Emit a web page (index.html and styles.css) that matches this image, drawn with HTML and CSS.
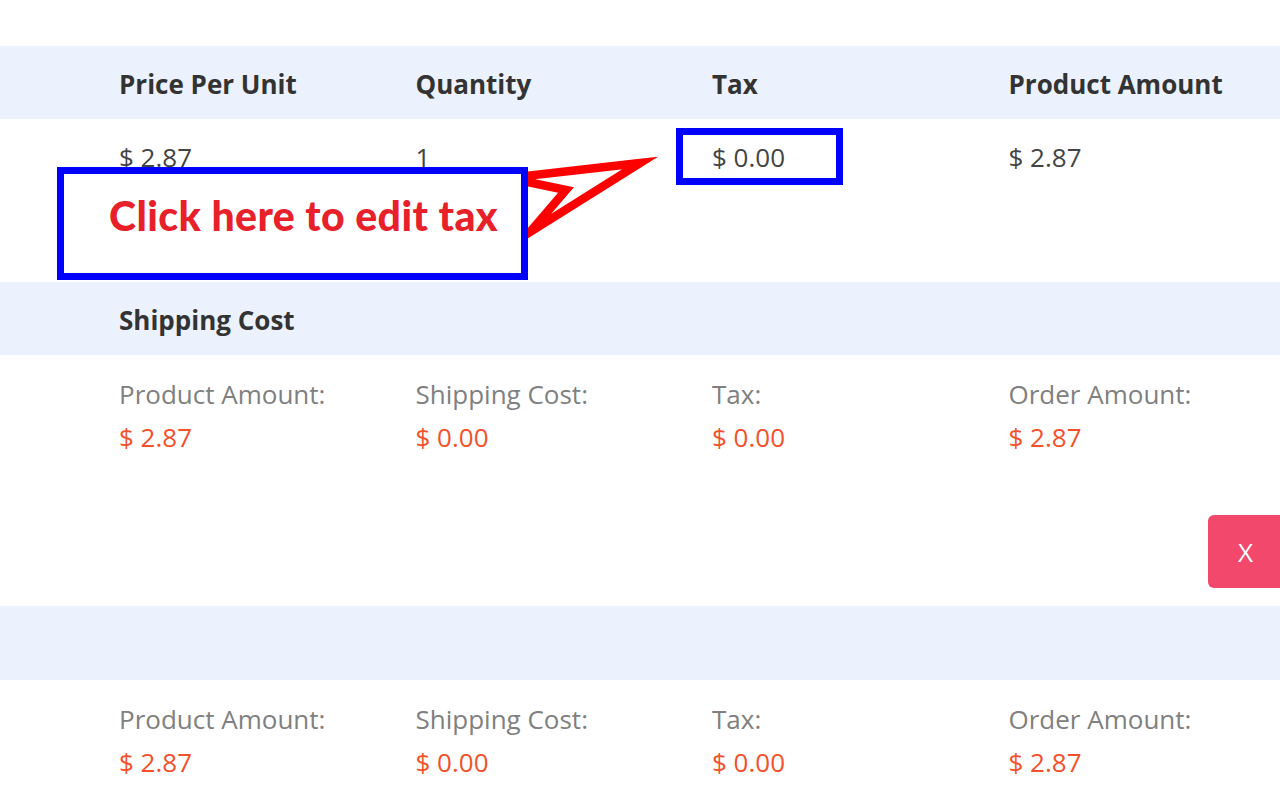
FILE: index.html
```html
<!DOCTYPE html>
<html>
<head>
<meta charset="utf-8">
<link rel="stylesheet" href="styles.css">
</head>
<body>
<div class="page">
  <div class="band cols">
    <div class="th">Price Per Unit</div>
    <div class="th">Quantity</div>
    <div class="th">Tax</div>
    <div class="th">Product Amount</div>
  </div>
  <div class="row cols">
    <div class="td">$ 2.87</div>
    <div class="td">1</div>
    <div class="td">$ 0.00</div>
    <div class="td">$ 2.87</div>
  </div>
  <div class="band cols">
    <div class="th">Shipping Cost</div>
  </div>
  <div class="summary cols">
    <div class="cell"><div class="lbl">Product Amount:</div><div class="val">$ 2.87</div></div>
    <div class="cell"><div class="lbl">Shipping Cost:</div><div class="val">$ 0.00</div></div>
    <div class="cell"><div class="lbl">Tax:</div><div class="val">$ 0.00</div></div>
    <div class="cell"><div class="lbl">Order Amount:</div><div class="val">$ 2.87</div></div>
    <button class="close">X</button>
  </div>
  <div class="band empty"></div>
  <div class="summary last cols">
    <div class="cell"><div class="lbl">Product Amount:</div><div class="val">$ 2.87</div></div>
    <div class="cell"><div class="lbl">Shipping Cost:</div><div class="val">$ 0.00</div></div>
    <div class="cell"><div class="lbl">Tax:</div><div class="val">$ 0.00</div></div>
    <div class="cell"><div class="lbl">Order Amount:</div><div class="val">$ 2.87</div></div>
  </div>

  <svg class="arrow" width="180" height="110" viewBox="0 0 180 110">
    <polygon points="140,23 8,38 66,50 30,92" fill="#fff" stroke="#ff0000" stroke-width="8.5" stroke-linejoin="miter" stroke-miterlimit="20"/>
  </svg>
  <div class="callout">Click here to edit tax</div>
  <div class="taxbox"></div>
</div>
</body>
</html>
```

FILE: styles.css
```css
html, body {
  margin: 0;
  padding: 0;
  background: #fff;
}
body {
  font-family: "Open Sans", "Noto Sans", sans-serif;
  width: 1280px;
  height: 800px;
  overflow: hidden;
}
.page {
  position: relative;
  padding-top: 46px;
}
.cols {
  display: grid;
  grid-template-columns: repeat(4, 296.5px);
  padding-left: 119px;
}
.band {
  background: #ebf1fd;
  height: 73px;
  align-items: center;
}
.band.empty {
  height: 74px;
}
.th {
  font-size: 26px;
  font-weight: 700;
  color: #333;
  padding-top: 2px;
}
.row {
  height: 163px;
  align-content: start;
  padding-top: 20px;
  box-sizing: border-box;
}
.td {
  font-size: 26px;
  color: #444;
  line-height: 36px;
}
.summary {
  position: relative;
  height: 251px;
  box-sizing: border-box;
  padding-top: 21px;
  align-content: start;
}
.summary.last {
  height: 120px;
}
.lbl {
  font-size: 26px;
  color: #808080;
  line-height: 36px;
}
.val {
  font-size: 26px;
  color: #f2512c;
  line-height: 36px;
  margin-top: 7px;
}
.close {
  position: absolute;
  left: 1208px;
  top: 160px;
  width: 84px;
  height: 73px;
  border: none;
  border-radius: 6px;
  background: #f1486b;
  color: #fff;
  font-family: "Open Sans", "Noto Sans", sans-serif;
  font-size: 26px;
  padding: 0 9px 0 0;
  text-align: center;
}
.arrow {
  position: absolute;
  left: 500px;
  top: 140px;
}
.callout {
  position: absolute;
  left: 57px;
  top: 167px;
  width: 471px;
  height: 113px;
  box-sizing: border-box;
  border: 7px solid #0000ff;
  background: #fff;
  color: #e8202a;
  font-family: "Lato", "Open Sans", sans-serif;
  font-weight: 900;
  font-size: 41px;
  padding: 20px 0 0 45px;
  line-height: 44px;
  letter-spacing: 0.4px;
  white-space: nowrap;
}
.taxbox {
  position: absolute;
  left: 676px;
  top: 128px;
  width: 167px;
  height: 57px;
  box-sizing: border-box;
  border: 7px solid #0000ff;
}
```
